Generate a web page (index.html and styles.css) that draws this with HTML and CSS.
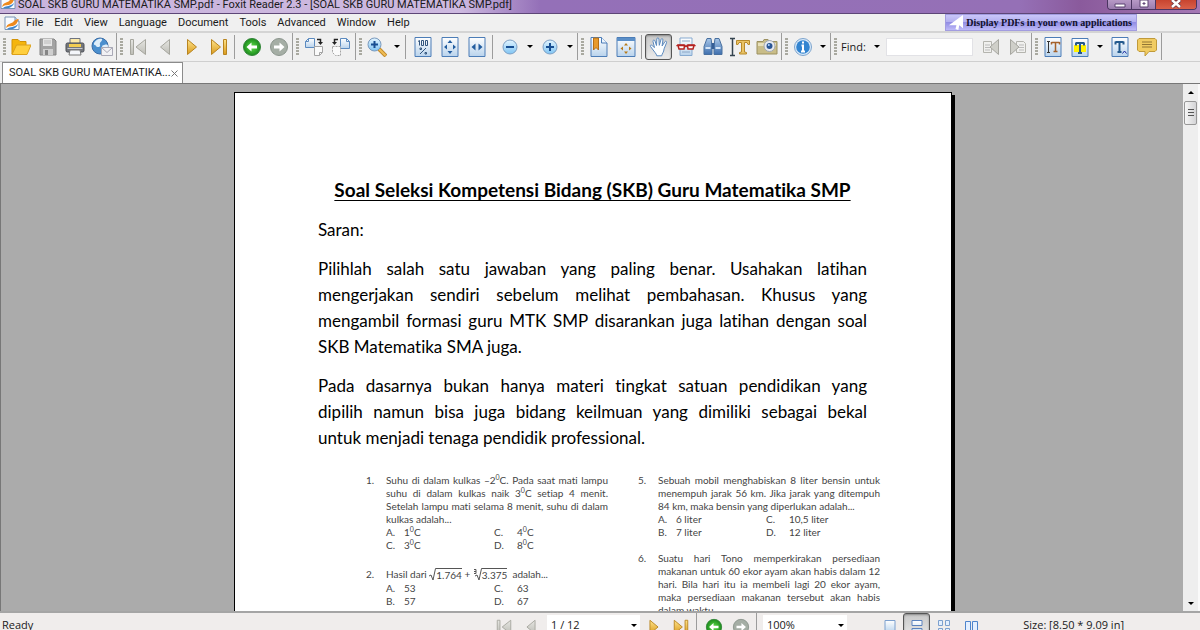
FILE: index.html
```html
<!DOCTYPE html>
<html lang="id">
<head>
<meta charset="utf-8">
<title>SOAL SKB GURU MATEMATIKA SMP.pdf - Foxit Reader 2.3</title>
<link rel="stylesheet" href="styles.css">
</head>
<body>
<svg class="defs" aria-hidden="true">
  <defs>
    <linearGradient id="gold" x1="0" y1="0" x2="0" y2="1"><stop offset="0" stop-color="#ffe48a"/><stop offset="1" stop-color="#d99a1c"/></linearGradient>
    <linearGradient id="silver" x1="0" y1="0" x2="0" y2="1"><stop offset="0" stop-color="#e6e6e2"/><stop offset="1" stop-color="#bdbdb6"/></linearGradient>
    <linearGradient id="sky" x1="0" y1="0" x2="0" y2="1"><stop offset="0" stop-color="#ffffff"/><stop offset="1" stop-color="#b9d3ec"/></linearGradient>
    <linearGradient id="lens" x1="0" y1="0" x2="0" y2="1"><stop offset="0" stop-color="#e2f4ff"/><stop offset="1" stop-color="#7fc4f3"/></linearGradient>
    <linearGradient id="blue" x1="0" y1="0" x2="0" y2="1"><stop offset="0" stop-color="#a9c8ea"/><stop offset="1" stop-color="#3f6fae"/></linearGradient>
    <radialGradient id="green"><stop offset="0" stop-color="#5ee04a"/><stop offset="1" stop-color="#1c8a1c"/></radialGradient>
    <symbol id="logo" viewBox="0 0 16 16"><path d="M1 2h10l4 4v8.500H1z" fill="#f8fbff" stroke="#7894b4"/><path d="M11 2v4h4" fill="#cfdff0" stroke="#7894b4"/><path d="M2 13C3 8 7 9 9 7s3-3 6-3c-2 2-1 4-4 6s-5 0-9 3z" fill="#ee8a1d"/><path d="M3 14c4-3 7-1 11-5-1 4-5 6-11 5z" fill="#3f86cc"/></symbol>
    <symbol id="open" viewBox="0 0 20 20"><path d="M1 17V2.500h6l2 2h6V9H6z" fill="#f5b50c" stroke="#d29307"/><path d="M1 17.500 5.500 8H20l-4 9.500z" fill="#ffcf3e" stroke="#dca11a"/></symbol>
    <symbol id="save" viewBox="0 0 20 20"><path d="M2 2h14l2 2v14H2z" fill="#a3a3a3" stroke="#858585"/><path d="M5 2h9v7H5z" fill="#e5e5e5"/><path d="M6 4h7M6 6h7" stroke="#bbb"/><path d="M5 12h10v6H5z" fill="#cfcfcf"/><path d="M7 13h3v5H7z" fill="#858585"/></symbol>
    <symbol id="print" viewBox="0 0 20 20"><path d="M5 1.500h10V7H5z" fill="#fbe9a8" stroke="#6e7380"/><rect x="1" y="6" width="18" height="9" rx="1.500" fill="#73767c" stroke="#4b4e55"/><path d="M4 7h12v3H4z" fill="#f2cd52"/><path d="M2.500 11.500h15" stroke="#c8cacd"/><path d="M5 13h10l1 5H4z" fill="#f4f6fa" stroke="#777"/></symbol>
    <symbol id="mail" viewBox="0 0 22 20"><circle cx="9" cy="9" r="8" fill="#4b8fce" stroke="#3a6ca6"/><path d="M3 6c2-4 6-5 8-4 1 2-3 3-2 6 1 2-3 3-4 1S3 9 3 6zM11 9c3-2 6-2 6 0s-2 5-5 6c-2-1 0-3-1-6z" fill="#dfeefa"/><path d="M10.500 10.500h11v8h-11z" fill="#f1f1f4" stroke="#a9a9b6"/><path d="m10.500 10.500 5.500 5 5.500-5" fill="none" stroke="#a9a9b6"/></symbol>
    <symbol id="first" viewBox="0 0 20 20"><path d="M2.500 2.500h3v15h-3zM17.500 2.500v15L8 10z"/></symbol>
    <symbol id="prev" viewBox="0 0 20 20"><path d="M14.500 2.500v15L5.500 10z"/></symbol>
    <symbol id="next" viewBox="0 0 20 20"><path d="M5.500 2.500v15L14.500 10z"/></symbol>
    <symbol id="last" viewBox="0 0 20 20"><path d="M2.500 2.500v15L11.500 10zM14.500 2.500h3v15h-3z"/></symbol>
    <symbol id="back" viewBox="0 0 20 20"><circle cx="10" cy="10" r="8.500" fill="url(#green)" stroke="#34873a"/><path d="m4.500 10 5-4.500v3h5.500v3H9.500v3z" fill="#fff"/></symbol>
    <symbol id="forward" viewBox="0 0 20 20"><circle cx="10" cy="10" r="8.500" fill="#a5aea5" stroke="#8b958d"/><path d="m15.500 10-5-4.500v3H5v3h5.500v3z" fill="#fff"/></symbol>
    <symbol id="rotright" viewBox="0 0 20 20"><path d="M4.500 1.500h6v9h-9v-6z" fill="url(#sky)" stroke="#5c8bc0"/><path d="M4.500 1.500v3h-3" fill="none" stroke="#5c8bc0"/><path d="M10.500 9.500h8v6l-3 3h-5z" fill="#fafafa" stroke="#a4a4a4"/><path d="M18.500 15.500h-3v3" fill="none" stroke="#a4a4a4"/><path d="M13 2.500h3.500V6" fill="none" stroke="#222" stroke-width="1.500"/><path d="M14 5h5l-2.500 3z" fill="#222"/></symbol>
    <symbol id="rotleft" viewBox="0 0 20 20"><path d="M9.500 1.500h6l3 3v7h-9z" fill="url(#sky)" stroke="#5c8bc0"/><path d="M15.500 1.500v3h3" fill="none" stroke="#5c8bc0"/><path d="M1.500 9.500h8v9h-5l-3-3z" fill="#fafafa" stroke="#a4a4a4" stroke-dasharray="2 1"/><path d="M7 2.500H3.500V6" fill="none" stroke="#222" stroke-width="1.500"/><path d="M1 5h5L3.500 8z" fill="#222"/></symbol>
    <symbol id="zoomtool" viewBox="0 0 20 20"><path d="m12 12 7 7" stroke="#c18a2c" stroke-width="4"/><path d="m12 12 6.500 6.500" stroke="#f0bd55" stroke-width="2"/><circle cx="7.500" cy="7.500" r="6.500" fill="url(#lens)" stroke="#7999bd"/><path d="M4 7.500h7M7.500 4v7" stroke="#174e92" stroke-width="2"/></symbol>
    <symbol id="actual" viewBox="0 0 20 20"><path d="M2 .5h16v19H2z" fill="url(#sky)" stroke="#4c7db7"/><path d="M5 4.500 6.500 3.500v5M8.500 3.500h2v5h-2zM12.500 3.500h2v5h-2z" fill="none" stroke="#31547d"/><path d="m7 17 6-6M7 11h1.500v1.500H7zM12 15.500h1.500V17H12z" fill="none" stroke="#31547d"/></symbol>
    <symbol id="fitpage" viewBox="0 0 20 20"><path d="M2 .5h16v19H2z" fill="url(#sky)" stroke="#4c7db7"/><path d="m10 3 2.500 3h-5zM10 17l2.500-3h-5zM4 10l3-2.500v5zM16 10l-3-2.500v5z" fill="#235d9f"/></symbol>
    <symbol id="fitwidth" viewBox="0 0 20 20"><path d="M2 .5h16v19H2z" fill="url(#sky)" stroke="#4c7db7"/><path d="m4.500 10 4-3.500v7zM15.500 10l-4-3.500v7z" fill="#235d9f"/></symbol>
    <symbol id="minus" viewBox="0 0 20 20"><circle cx="10" cy="10" r="7" fill="url(#lens)" stroke="#7da0c5"/><path d="M6 10h8" stroke="#174e92" stroke-width="2"/></symbol>
    <symbol id="plus" viewBox="0 0 20 20"><circle cx="10" cy="10" r="7" fill="url(#lens)" stroke="#7da0c5"/><path d="M6 10h8M10 6v8" stroke="#174e92" stroke-width="2"/></symbol>
    <symbol id="bookmark" viewBox="0 0 20 20"><path d="M2 .5h10.500l5.500 5.500v13.500H2z" fill="url(#sky)" stroke="#4c7db7"/><path d="M12.500.5V6H18" fill="#eef6ff" stroke="#4c7db7"/><path d="M4.500 1h5v12L7 10.500 4.500 13z" fill="#e79a2c" stroke="#b66e15"/></symbol>
    <symbol id="fullscreen" viewBox="0 0 20 20"><path d="M1 .5h18v19H1z" fill="url(#sky)" stroke="#4c7db7"/><path d="M1 1h18v3H1z" fill="#5b8fc8"/><path d="m10 6 2 2.500H8zM10 17l2-2.500H8zM4.500 11.500l2.500-2v4zM15.500 11.500l-2.500-2v4z" fill="#b77a18"/></symbol>
    <symbol id="hand" viewBox="0 0 20 20"><path d="M6 15.500 1.500 9.500C.8 8 2.300 7.600 3.200 8.600l2.300 2L4 4.500c-.3-1.600 1.600-2 2-.5l1.500 4.500L7.800 2c.1-1.500 2-1.500 2.100 0l.4 6.300L12 2.500c.4-1.400 2.200-1 1.900.5l-.8 6 2.700-4.200c.8-1.200 2.300-.4 1.700 1l-2.400 6c-.3 3.500-2 4.700-2.400 7H7.800c-.2-1.400-.9-2-1.800-3.300z" fill="#fcfeff" stroke="#5c8abf"/></symbol>
    <symbol id="glasses" viewBox="0 0 20 20"><path d="M4 1h12v17.500H4z" fill="url(#sky)" stroke="#87aad0"/><path d="M6 4h8M6 15h8" stroke="#8aa6c6"/><path d="M.5 9 2 8h6l2 1.500L12 8h6l1.500 1" fill="none" stroke="#b52220" stroke-width="1.500"/><path d="M2 8.500h6.500L8 12H3zM11.500 8.500H18L17 12h-5z" fill="#fff" stroke="#b52220" stroke-width="1.500"/></symbol>
    <symbol id="binoc" viewBox="0 0 20 20"><path d="M4 1.500h4l1 7v9H1v-8zM12 1.500h4l3 8v8h-8v-9z" fill="url(#blue)" stroke="#49709f"/><path d="M8.500 6h3v6h-3z" fill="#365f96"/><path d="M2.500 11h5M12.500 11h5" stroke="#d4e5f8" stroke-width="2"/></symbol>
    <symbol id="seltext" viewBox="0 0 20 20"><path d="M0 1.500h5M2.500 2v16M0 18.500h5" stroke="#34434f" stroke-width="1.500"/><path d="M6.500 3.500h13v4h-1.500l-1-2h-2.500v9.500l2 .5v1.500h-7v-1.500l2-.5V5.500H9l-1 2H6.500z" fill="#eac365" stroke="#b88a2c"/></symbol>
    <symbol id="camera" viewBox="0 0 22 20"><path d="M1 4.500h6l1-2h4l2 2h7v12.500H1z" fill="#c9bd88" stroke="#9c9161"/><path d="M2 6h18v3H2z" fill="#e8e0bb"/><circle cx="13.500" cy="9" r="5.500" fill="#e7eaef" stroke="#a2a7b0"/><circle cx="13.500" cy="9" r="3" fill="#2b5796"/><circle cx="12.800" cy="8" r="1" fill="#b7d8ff"/></symbol>
    <symbol id="info" viewBox="0 0 20 20"><circle cx="10" cy="10" r="8.500" fill="#d9eafa" stroke="#7da4cd"/><circle cx="10" cy="10" r="6.800" fill="#3284d0"/><path d="M10 4.500v2M8.500 8.500H10v6M8 14.500h4" fill="none" stroke="#fff" stroke-width="2"/></symbol>
    <symbol id="findprev" viewBox="0 0 20 20"><path d="M2.500 4.500h8v11h-8z" fill="#f0f0ee" stroke="#b4b4ae"/><path d="M4 8h5M4 10.500h5M4 13h5" stroke="#bbb"/><path d="M17.500 2.500v15L9 10z" fill="#cfcfc9" stroke="#a6a6a0"/></symbol>
    <symbol id="findnext" viewBox="0 0 20 20"><path d="M8.500 4.500h7l2 2v9h-9z" fill="#f0f0ee" stroke="#b4b4ae"/><path d="M11 8h5M11 10.500h5M11 13h5" stroke="#bbb"/><path d="M2.500 2.500v15L11 10z" fill="#cfcfc9" stroke="#a6a6a0"/></symbol>
    <symbol id="typew" viewBox="0 0 20 20"><path d="M2 .5h16v19H2z" fill="url(#sky)" stroke="#4c7db7"/><path d="M4 4.500h3M5.500 5v10M4 15.500h3" stroke="#333"/><path d="M8.500 5.500h8M12.500 5v9.500M10.500 14.500h4M8.500 5v2.500M16.500 5v2.500" fill="none" stroke="#a4622c" stroke-width="1.500"/></symbol>
    <symbol id="highlight" viewBox="0 0 20 20"><path d="M2 1.500h16v18H2z" fill="url(#sky)" stroke="#4c7db7"/><path d="M4 8h12v7H4z" fill="#fff200"/><path d="M6 6h8M10 5.500V16M8 16h4M6 5.500v3M14 5.500v3" fill="none" stroke="#245a8d" stroke-width="2"/></symbol>
    <symbol id="under" viewBox="0 0 20 20"><path d="M2 .5h16v19H2z" fill="url(#sky)" stroke="#4c7db7"/><path d="M5.500 5h8M9.500 4.500V15M7.500 15h4M5.500 4.500v3M13.500 4.500v3" fill="none" stroke="#245a8d" stroke-width="2"/><path d="m12.500 16.500 2-2.500 2 2.500" fill="none" stroke="#1828a0"/></symbol>
    <symbol id="note" viewBox="0 0 20 20"><path d="M2 1.500h16l1.500 1.500v10L18 14.500h-6l-4 4.500v-4.500H2L.5 13V3z" fill="#f1cc62" stroke="#c09a3a"/><path d="M5 5h10M5 7.500h10M5 10h10" stroke="#927634"/></symbol>
    <symbol id="single" viewBox="0 0 20 20"><path d="M5 3.500h10v12H5z" fill="url(#sky)" stroke="#7da0ce"/></symbol>
    <symbol id="cont" viewBox="0 0 20 20"><path d="M5 3.500h10v5H5zM5 11.500h10v7H5z" fill="url(#sky)" stroke="#5c83be"/></symbol>
    <symbol id="grid" viewBox="0 0 20 20"><path d="M4.500 3.500h4v5h-4zM11.500 3.500h4v5h-4zM4.500 11.500h4v6h-4zM11.500 11.500h4v6h-4z" fill="#e3efff" stroke="#7da0ce"/></symbol>
    <symbol id="facing" viewBox="0 0 20 20"><path d="M4.500 4.500h5v10h-5zM11.500 4.500h5v10h-5z" fill="#e3efff" stroke="#4e84cc"/></symbol>
    <symbol id="down" viewBox="0 0 6 3"><path d="M0 0h6L3 3z" fill="#000"/></symbol>
  </defs>
</svg>

<div class="app">
  <header class="titlebar">
    <svg class="logo"><use href="#logo"/></svg>
    <span class="caption">SOAL SKB GURU MATEMATIKA SMP.pdf - Foxit Reader 2.3 - [SOAL SKB GURU MATEMATIKA SMP.pdf]</span>
    <div class="window-buttons">
      <button type="button" aria-label="Minimize"><svg viewBox="0 0 12 10"><path d="M1 4h10v3H1z" fill="#fff" stroke="#5a4370"/></svg></button>
      <button type="button" aria-label="Restore"><svg viewBox="0 0 12 10"><path d="M2 0h8v7H2zM5 3h2v1H5z" fill="#fff" fill-rule="evenodd" stroke="#5a4370"/></svg></button>
      <button type="button" class="close" aria-label="Close"><svg viewBox="0 0 12 10"><path d="m2 0 8 7M10 0 2 7" stroke="#6a3140" stroke-width="4"/><path d="m2 0 8 7M10 0 2 7" stroke="#fff" stroke-width="2.500"/></svg></button>
    </div>
  </header>

  <nav class="menubar">
    <svg class="logo"><use href="#logo"/></svg>
    <button type="button">File</button><button type="button">Edit</button><button type="button">View</button><button type="button">Language</button><button type="button">Document</button><button type="button">Tools</button><button type="button">Advanced</button><button type="button">Window</button><button type="button">Help</button>
    <a class="banner" href="#"><svg viewBox="0 0 18 16"><path d="M17 0v14l-4-3-1 5-3-1 1-4H2z" fill="#fff"/></svg>Display PDFs in your own applications</a>
  </nav>

  <div class="toolbar">
    <div class="group">
      <button type="button" class="tool" aria-label="Open"><svg><use href="#open"/></svg></button>
      <button type="button" class="tool" aria-label="Save"><svg><use href="#save"/></svg></button>
      <button type="button" class="tool" aria-label="Print"><svg><use href="#print"/></svg></button>
      <button type="button" class="tool" aria-label="Email"><svg class="wide"><use href="#mail"/></svg></button>
    </div>
    <div class="group tight">
      <button type="button" class="tool off" aria-label="First page"><svg><use href="#first"/></svg></button>
      <button type="button" class="tool off" aria-label="Previous page"><svg><use href="#prev"/></svg></button>
      <button type="button" class="tool on" aria-label="Next page"><svg><use href="#next"/></svg></button>
      <button type="button" class="tool on" aria-label="Last page"><svg><use href="#last"/></svg></button>
      <i class="sep"></i>
      <button type="button" class="tool" aria-label="Previous view"><svg><use href="#back"/></svg></button>
      <button type="button" class="tool" aria-label="Next view"><svg><use href="#forward"/></svg></button>
    </div>
    <div class="group">
      <button type="button" class="tool" aria-label="Rotate right"><svg><use href="#rotright"/></svg></button>
      <button type="button" class="tool" aria-label="Rotate left"><svg><use href="#rotleft"/></svg></button>
    </div>
    <div class="group">
      <button type="button" class="tool" aria-label="Zoom tool"><svg><use href="#zoomtool"/></svg></button>
      <button type="button" class="drop" aria-label="Zoom tools"><svg><use href="#down"/></svg></button>
      <i class="sep"></i>
      <button type="button" class="tool" aria-label="Actual size"><svg><use href="#actual"/></svg></button>
      <button type="button" class="tool" aria-label="Fit page"><svg><use href="#fitpage"/></svg></button>
      <button type="button" class="tool" aria-label="Fit width"><svg><use href="#fitwidth"/></svg></button>
      <i class="sep"></i>
      <button type="button" class="tool" aria-label="Zoom out"><svg><use href="#minus"/></svg></button>
      <button type="button" class="drop" aria-label="Zoom out levels"><svg><use href="#down"/></svg></button>
      <button type="button" class="tool" aria-label="Zoom in"><svg><use href="#plus"/></svg></button>
      <button type="button" class="drop" aria-label="Zoom in levels"><svg><use href="#down"/></svg></button>
    </div>
    <div class="group">
      <button type="button" class="tool" aria-label="Bookmarks"><svg><use href="#bookmark"/></svg></button>
      <button type="button" class="tool" aria-label="Full screen"><svg><use href="#fullscreen"/></svg></button>
      <i class="sep"></i>
      <button type="button" class="tool pressed" aria-label="Hand tool"><svg><use href="#hand"/></svg></button>
      <button type="button" class="tool" aria-label="Text viewer"><svg><use href="#glasses"/></svg></button>
      <button type="button" class="tool" aria-label="Search"><svg><use href="#binoc"/></svg></button>
      <button type="button" class="tool" aria-label="Select text"><svg><use href="#seltext"/></svg></button>
      <button type="button" class="tool" aria-label="Snapshot"><svg class="wide"><use href="#camera"/></svg></button>
    </div>
    <div class="group">
      <button type="button" class="tool" aria-label="About"><svg><use href="#info"/></svg></button>
      <button type="button" class="drop" aria-label="Help topics"><svg><use href="#down"/></svg></button>
    </div>
    <div class="group tight find">
      <label for="find">Find:</label>
      <button type="button" class="drop" aria-label="Find options"><svg><use href="#down"/></svg></button>
      <input id="find" type="text">
      <button type="button" class="tool" aria-label="Find previous"><svg><use href="#findprev"/></svg></button>
      <button type="button" class="tool" aria-label="Find next"><svg><use href="#findnext"/></svg></button>
    </div>
    <div class="group">
      <button type="button" class="tool" aria-label="Typewriter"><svg><use href="#typew"/></svg></button>
      <button type="button" class="tool" aria-label="Highlight"><svg><use href="#highlight"/></svg></button>
      <button type="button" class="drop" aria-label="Markup tools"><svg><use href="#down"/></svg></button>
      <button type="button" class="tool" aria-label="Insert text"><svg><use href="#under"/></svg></button>
      <button type="button" class="tool" aria-label="Note"><svg><use href="#note"/></svg></button>
    </div>
  </div>

  <div class="tabs">
    <div class="tab"><span>SOAL SKB GURU MATEMATIKA...</span><button type="button" aria-label="Close tab"><svg viewBox="0 0 7 7"><path d="m.5.5 6 6M6.500.5l-6 6" stroke="#777"/></svg></button></div>
  </div>

  <main class="work">
    <div class="canvas">
      <article class="page">
        <h1>Soal Seleksi Kompetensi Bidang (SKB) Guru Matematika SMP</h1>
        <p>Saran:</p>
        <p class="just">
          <span>Pilihlah salah satu jawaban yang paling benar. Usahakan latihan</span>
          <span>mengerjakan sendiri sebelum melihat pembahasan. Khusus yang</span>
          <span>mengambil formasi guru MTK SMP disarankan juga latihan dengan soal</span>
          <span class="end">SKB Matematika SMA juga.</span>
        </p>
        <p class="just">
          <span>Pada dasarnya bukan hanya materi tingkat satuan pendidikan yang</span>
          <span>dipilih namun bisa juga bidang keilmuan yang dimiliki sebagai bekal</span>
          <span class="end">untuk menjadi tenaga pendidik professional.</span>
        </p>
        <div class="questions">
          <div class="column">
            <section class="question">
              <b>1.</b>
              <div>
                <p class="just">
                  <span>Suhu di dalam kulkas –2<sup>0</sup>C. Pada saat mati lampu</span>
                  <span>suhu di dalam kulkas naik 3<sup>0</sup>C setiap 4 menit.</span>
                  <span>Setelah lampu mati selama 8 menit, suhu di dalam</span>
                  <span class="end">kulkas adalah...</span>
                </p>
                <div class="answers"><span>A.</span><span>1<sup>0</sup>C</span><span>C.</span><span>4<sup>0</sup>C</span><span>C.</span><span>3<sup>0</sup>C</span><span>D.</span><span>8<sup>0</sup>C</span></div>
              </div>
            </section>
            <section class="question spaced">
              <b>2.</b>
              <div>
                <p class="formula">Hasil dari <svg class="root" viewBox="0 0 7 13"><path d="m0 8 2-1 2 5L6.500.5H7" fill="none" stroke="#555"/></svg><span class="radicand">1.764</span> + <svg class="root cube" viewBox="0 0 9 13"><path d="m2 8 2-1 2 5L8.500.5H9M1 1.500h2v4H1M1 3.500h2" fill="none" stroke="#555"/></svg><span class="radicand">3.375</span>&nbsp; adalah...</p>
                <div class="answers"><span>A.</span><span>53</span><span>C.</span><span>63</span><span>B.</span><span>57</span><span>D.</span><span>67</span></div>
              </div>
            </section>
          </div>
          <div class="column">
            <section class="question">
              <b>5.</b>
              <div>
                <p class="just">
                  <span>Sebuah mobil menghabiskan 8 liter bensin untuk</span>
                  <span>menempuh jarak 56 km. Jika jarak yang ditempuh</span>
                  <span class="end">84 km, maka bensin yang diperlukan adalah...</span>
                </p>
                <div class="answers"><span>A.</span><span>6 liter</span><span>C.</span><span>10,5 liter</span><span>B.</span><span>7 liter</span><span>D.</span><span>12 liter</span></div>
              </div>
            </section>
            <section class="question">
              <b>6.</b>
              <div>
                <p class="just">
                  <span>Suatu hari Tono memperkirakan persediaan</span>
                  <span>makanan untuk 60 ekor ayam akan habis dalam 12</span>
                  <span>hari. Bila hari itu ia membeli lagi 20 ekor ayam,</span>
                  <span>maka persediaan makanan tersebut akan habis</span>
                  <span class="end">dalam waktu ...</span>
                </p>
              </div>
            </section>
          </div>
        </div>
      </article>
    </div>
    <div class="scrollbar">
      <button type="button" aria-label="Scroll up"><svg class="up"><use href="#down"/></svg></button>
      <div class="thumb"></div>
      <button type="button" class="bottom" aria-label="Scroll down"><svg><use href="#down"/></svg></button>
    </div>
  </main>

  <footer class="status">
    <span class="ready">Ready</span>
    <div class="pager">
      <button type="button" class="tool off" aria-label="First page"><svg><use href="#first"/></svg></button>
      <button type="button" class="tool off" aria-label="Previous page"><svg><use href="#prev"/></svg></button>
      <span class="combo"><select aria-label="Page"><option>1 / 12</option></select><svg><use href="#down"/></svg></span>
      <button type="button" class="tool on" aria-label="Next page"><svg><use href="#next"/></svg></button>
      <button type="button" class="tool on" aria-label="Last page"><svg><use href="#last"/></svg></button>
      <i class="sep"></i>
      <button type="button" class="tool" aria-label="Previous view"><svg><use href="#back"/></svg></button>
      <button type="button" class="tool" aria-label="Next view"><svg><use href="#forward"/></svg></button>
      <i class="sep"></i>
      <span class="combo zoom"><select aria-label="Zoom"><option>100%</option></select><svg><use href="#down"/></svg></span>
    </div>
    <div class="layouts">
      <button type="button" class="tool" aria-label="Single page"><svg><use href="#single"/></svg></button>
      <button type="button" class="tool pressed" aria-label="Continuous"><svg><use href="#cont"/></svg></button>
      <button type="button" class="tool" aria-label="Continuous facing"><svg><use href="#grid"/></svg></button>
      <button type="button" class="tool" aria-label="Facing"><svg><use href="#facing"/></svg></button>
    </div>
    <span class="size">Size: [8.50 * 9.09 in]</span>
  </footer>
</div>
</body>
</html>
```
FILE: styles.css
```css
* { box-sizing: border-box; }
body { margin: 0; font: 11px/16px "Open Sans", "Noto Sans", sans-serif; color: #1a1a1a; }
button { margin: 0; padding: 0; border: 0; background: none; font: inherit; color: inherit; }
svg { display: block; }
.defs { position: absolute; width: 0; height: 0; }
.app { display: flex; flex-direction: column; height: 100vh; overflow: hidden; background: #f0f0f0; }

.titlebar {
  flex: none; display: flex; align-items: flex-start; height: 14px; overflow: hidden;
  border-bottom: 1px solid #5d4677;
  background: linear-gradient(90deg, #c9b4dc 0, #cdb9e0 460px, #9470b8 540px, #9570b6 85%, #8a5a9c 90%, #a578b4 100%);
}
.logo { flex: none; width: 16px; height: 16px; }
.titlebar .logo { margin-top: -6px; }
.caption { flex: 1; padding-left: 2px; font-family: Roboto, sans-serif; line-height: 9px; white-space: nowrap; }
.window-buttons { display: flex; height: 10px; margin-right: 3px; border: 1px solid #4a3560; border-top: 0; border-radius: 0 0 4px 4px; overflow: hidden; }
.window-buttons button { display: flex; justify-content: center; width: 24px; background: linear-gradient(#b79ac6, #9a7cae); border-right: 1px solid #4a3560; }
.window-buttons .close { width: 40px; border-right: 0; background: linear-gradient(#c8442f, #d9604a); }
.window-buttons svg { width: 12px; height: 10px; }

.menubar { flex: none; display: flex; align-items: center; height: 17px; padding-left: 4px; font-family: Roboto, sans-serif; }
.menubar button { margin-left: 11px; white-space: nowrap; }
.menubar .logo + button { margin-left: 6px; }
.banner {
  display: flex; align-items: center; gap: 2px; height: 17px; margin: 0 63px 0 auto; padding: 0 4px 0 1px;
  border: 1px solid #a29ce0; background: linear-gradient(#c9c6fa, #b4b0f0 45%, #928de4 50%, #bdb9f8);
  color: #10102a; font: bold 10px/14px "Liberation Serif", serif; text-decoration: none; white-space: nowrap;
}
.banner svg { width: 17px; height: 15px; }

.toolbar { flex: none; display: flex; height: 31px; padding-bottom: 1px; border-top: 2px solid #d4d4d4; border-bottom: 1px solid #cfcfcf; }
.group { display: flex; align-items: center; padding: 0 1px 0 3px; border-right: 1px solid #9c9c9c; }
.group.tight { padding-right: 0; }
.group::before { content: ""; width: 3px; height: 18px; margin-right: 1px; background: repeating-linear-gradient(#a9a9a0 0 2px, transparent 2px 3px); }
.tool { flex: none; display: flex; align-items: center; justify-content: center; width: 27px; height: 26px; }
.tool svg { width: 20px; height: 20px; }
.tool svg.wide { width: 22px; }
.off svg { fill: url(#silver); stroke: #a6a69e; }
.on svg { fill: url(#gold); stroke: #b88420; }
.pressed { border: 1px solid #555; border-radius: 3px; background: linear-gradient(#c8c8c8, #ebebeb); box-shadow: inset 0 1px 2px #888; }
.drop { flex: none; display: flex; align-items: center; justify-content: center; width: 13px; height: 26px; }
.drop svg, .combo svg, .scrollbar svg { width: 6px; height: 3px; }
.sep { flex: none; width: 1px; height: 24px; margin: 0 3px 0 2px; background: #9c9c9c; }
.find label { width: 32px; padding-left: 3px; }
.find input { width: 87px; height: 18px; margin: 0 4px 0 3px; padding: 0 2px; border: 1px solid #e2e2e6; background: #fff; font: inherit; }

.tabs { flex: none; display: flex; height: 22px; padding-left: 2px; border-bottom: 1px solid #777; }
.tab { display: flex; align-items: center; height: 21px; padding: 0 4px 0 6px; border: 1px solid #8b8b8b; border-bottom: 0; background: #fff; font-family: Roboto, sans-serif; white-space: nowrap; }
.tab svg { width: 7px; height: 7px; }

.work { flex: 1; display: flex; min-height: 0; border-left: 1px solid #777; }
.canvas { flex: 1; display: flex; justify-content: center; min-width: 0; padding: 8px 0 0 2px; overflow: hidden; background: #ababab; }
.page {
  flex: none; width: 718px; height: 900px; padding: 84px 84px 0 83px; border: 1px solid #000; background: #fff;
  box-shadow: 3px 3px 0 #000; color: #000; font: 17px/26px Lato, sans-serif; font-variant-ligatures: none;
}
.page h1 { margin: 0 0 14px; font-size: 19px; line-height: 26px; font-weight: bold; text-align: center; text-decoration: underline; text-underline-offset: 3px; white-space: nowrap; }
.page p { margin: 0 0 13px; }
.just span { display: block; text-align-last: justify; white-space: nowrap; }
.just .end { text-align-last: left; }
.page .questions { display: flex; gap: 30px; margin: 23px -13px 0 48px; color: #444; font-size: 10px; line-height: 13px; }
.column { flex: 1; min-width: 0; }
.question { display: flex; margin-bottom: 13px; }
.question.spaced { margin-top: 16px; }
.question > b { flex: none; width: 20px; font-weight: normal; }
.question > div { flex: 1; min-width: 0; }
.page .question p { margin: 0; }
.question sup { font-size: 7px; line-height: 0; }
.answers { display: grid; grid-template-columns: 18px 90px 23px 1fr; }
.page .question .formula { display: flex; align-items: center; margin-bottom: 1px; white-space: pre; }
.root { width: 7px; height: 13px; }
.root.cube { width: 9px; }
.radicand { border-top: 1px solid #555; line-height: 12px; }

.scrollbar { flex: none; display: flex; flex-direction: column; width: 17px; border-right: 2px solid #fafafa; background: #eee; }
.scrollbar button { display: flex; align-items: center; justify-content: center; height: 16px; }
.scrollbar .up { transform: rotate(180deg); }
.scrollbar .bottom { margin-top: auto; }
.thumb { height: 24px; margin: 1px; border: 1px solid #979797; border-radius: 2px; background: linear-gradient(#555, #555) center 7px / 6px 1px no-repeat, linear-gradient(#555, #555) center 10px / 6px 1px no-repeat, linear-gradient(#555, #555) center 13px / 6px 1px no-repeat, linear-gradient(90deg, #f6f6f6, #d4d4d6); }

.status { flex: none; display: flex; align-items: flex-start; height: 19px; overflow: hidden; border-top: 2px solid #a5a5a5; background: #f0edec; }
.ready { flex: none; width: 490px; padding: 4px 0 0 2px; }
.pager, .layouts { flex: none; display: flex; align-items: flex-start; }
.status .tool { height: 27px; }
.status .tool svg { width: 18px; height: 18px; }
.status .layouts svg { width: 20px; height: 20px; }
.combo { display: flex; align-items: center; width: 93px; height: 20px; margin: 2px 0 0 3px; padding-right: 3px; background: #fff; }
.combo select { flex: 1; min-width: 0; padding: 0 0 0 4px; border: 0; background: none; appearance: none; font: inherit; color: inherit; }
.combo.zoom { width: 84px; }
.layouts { margin-left: 29px; }
.size { margin-left: auto; padding: 4px 76px 0 0; white-space: nowrap; }
```
